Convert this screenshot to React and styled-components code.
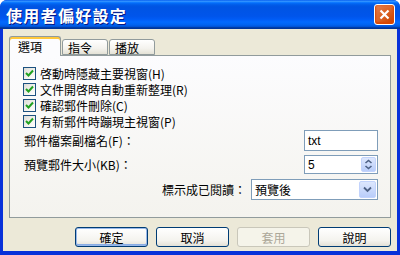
import React from "react";
import styled, { createGlobalStyle } from "styled-components";

const Global = createGlobalStyle`
  html, body { margin: 0; padding: 0; background: #ffffff; }
  body { font-family: "Noto Sans CJK TC", "Liberation Sans", sans-serif; font-size: 12px; }
  * { box-sizing: border-box; }
`;

const Window = styled.div`
  width: 400px;
  height: 255px;
  display: flex;
  flex-direction: column;
  background: #0831d9;
  border-radius: 7px 7px 0 0;
  overflow: hidden;
`;

const TitleBar = styled.div`
  height: 29px;
  flex: none;
  display: flex;
  align-items: center;
  justify-content: space-between;
  padding: 0 5px 0 6px;
  background: linear-gradient(
    180deg,
    #0058ee 0%,
    #3593ff 4%,
    #288eff 6%,
    #127dff 8%,
    #036ffc 10%,
    #0262ee 14%,
    #0057e5 20%,
    #0054e3 24%,
    #0055eb 56%,
    #005bf5 66%,
    #026afe 76%,
    #0062ef 86%,
    #0052d6 92%,
    #0040ab 94%,
    #003092 100%
  );
`;

const Title = styled.span`
  color: #ffffff;
  font-weight: bold;
  font-size: 16px;
  letter-spacing: 1.3px;
  line-height: 18px;
  text-shadow: 1px 1px 0 #0a1883;
`;

const CloseButton = styled.div`
  width: 21px;
  height: 21px;
  border: 1px solid #ffffff;
  border-radius: 3px;
  background: radial-gradient(circle at 90% 90%, #cc4600 0%, #dc6527 55%, #e4845b 100%);
  display: flex;
  align-items: center;
  justify-content: center;
  box-shadow: inset 0 -1px 2px 1px #da4600;
`;

const Body = styled.div`
  flex: 1;
  margin: 0 3px 4px 3px;
  background: #ece9d8;
  display: flex;
  flex-direction: column;
  padding: 7px 6px 0 6px;
`;

const TabRow = styled.div`
  display: flex;
  align-items: flex-end;
  height: 19px;
  position: relative;
  z-index: 1;
`;

const Tab = styled.div`
  height: ${(p) => (p.$active ? "20px" : "16px")};
  margin-bottom: ${(p) => (p.$active ? "-1px" : "0")};
  padding: 0 ${(p) => (p.$active ? "8px" : "5px")};
  width: ${(p) => (p.$active ? "52px" : "46px")};
  display: flex;
  align-items: center;
  font-size: 12px;
  color: #000;
  border: 1px solid #919b9c;
  border-bottom: ${(p) => (p.$active ? "none" : "1px solid #919b9c")};
  border-radius: 3px 3px 0 0;
  background: ${(p) =>
    p.$active ? "#fcfcfe" : "linear-gradient(180deg, #ffffff 0%, #f4f3ee 60%, #e4e2d6 100%)"};
  box-shadow: ${(p) => (p.$active ? "inset 0 2px 0 #ffc83c, inset 0 1px 0 #e68b2c" : "none")};
  margin-right: 1px;
`;

const Panel = styled.div`
  height: 163px;
  border: 1px solid #919b9c;
  background: linear-gradient(180deg, #fcfcfe 0%, #f4f3ee 100%);
  padding: 9px 0 0 13px;
  display: flex;
  flex-direction: column;
`;

const CheckRow = styled.label`
  height: 16px;
  display: flex;
  align-items: center;
  gap: 4px;
  color: #000;
  white-space: nowrap;
`;

const Box = styled.span`
  width: 13px;
  height: 13px;
  flex: none;
  border: 1px solid #1c5180;
  background: linear-gradient(135deg, #dcdcd7 0%, #f5f4ef 60%, #ffffff 100%);
  display: flex;
  align-items: center;
  justify-content: center;
`;

const FieldRow = styled.div`
  display: flex;
  align-items: center;
  justify-content: space-between;
  padding-right: 12px;
  height: 21px;
  margin-top: ${(p) => p.$mt || 0}px;
  white-space: nowrap;
`;

const RightRow = styled.div`
  display: flex;
  align-items: center;
  justify-content: flex-end;
  gap: 5px;
  padding-right: 12px;
  height: 21px;
  margin-top: ${(p) => p.$mt || 0}px;
  white-space: nowrap;
`;

const Label = styled.span`
  color: #000;
  padding-left: 1px;
`;

const TextBox = styled.div`
  width: 74px;
  height: 21px;
  border: 1px solid #7f9db9;
  background: #fff;
  display: flex;
  align-items: center;
  padding-left: 3px;
  font-family: "Liberation Sans", sans-serif;
  font-size: 12px;
`;

const SpinBox = styled(TextBox)`
  justify-content: space-between;
  padding-right: 1px;
  height: 19px;
`;

const SpinButtons = styled.div`
  width: 15px;
  height: 15px;
  border-radius: 2px;
  background: linear-gradient(180deg, #dde7fd 0%, #b9cdfa 100%);
  border: 1px solid #c2d3fc;
  display: flex;
  align-items: center;
  justify-content: center;
`;

const Combo = styled(TextBox)`
  width: 127px;
  justify-content: space-between;
  padding-right: 1px;
  font-family: "Noto Sans CJK TC", sans-serif;
`;

const DropButton = styled.div`
  width: 17px;
  height: 17px;
  border-radius: 2px;
  background: linear-gradient(180deg, #dde7fd 0%, #b9cdfa 100%);
  border: 1px solid #c2d3fc;
  display: flex;
  align-items: center;
  justify-content: center;
`;

const ButtonRow = styled.div`
  display: flex;
  justify-content: flex-end;
  gap: 8px;
  margin-top: 9px;
`;

const Button = styled.div`
  width: 73px;
  height: 20px;
  border-radius: 3px;
  border: 1px solid ${(p) => (p.$disabled ? "#c9c7ba" : "#003c74")};
  background: ${(p) =>
    p.$disabled ? "#f5f4ea" : "linear-gradient(180deg, #ffffff 0%, #f4f3ee 70%, #e3e1d7 100%)"};
  color: ${(p) => (p.$disabled ? "#aca899" : "#000")};
  box-shadow: ${(p) => (p.$focus ? "inset 0 0 0 1px #98b8ea, inset 0 -1px 0 1px #89ade4" : "none")};
  display: flex;
  align-items: center;
  justify-content: center;
  font-size: 12px;
`;

const Check = () => (
  <svg width="9" height="9" viewBox="0 0 9 9">
    <path d="M1 4 L3.5 6.5 L8 1.5" stroke="#21a121" strokeWidth="2" fill="none" />
  </svg>
);

export default function App() {
  return (
    <>
      <Global />
      <Window>
        <TitleBar>
          <Title>使用者偏好設定</Title>
          <CloseButton>
            <svg width="11" height="11" viewBox="0 0 11 11">
              <path d="M1.5 1.5 L9.5 9.5 M9.5 1.5 L1.5 9.5" stroke="#fff" strokeWidth="2.2" />
            </svg>
          </CloseButton>
        </TitleBar>
        <Body>
          <TabRow>
            <Tab $active>選項</Tab>
            <Tab>指令</Tab>
            <Tab>播放</Tab>
          </TabRow>
          <Panel>
            <CheckRow><Box><Check /></Box>啓動時隱藏主要視窗(H)</CheckRow>
            <CheckRow><Box><Check /></Box>文件開啓時自動重新整理(R)</CheckRow>
            <CheckRow><Box><Check /></Box>確認郵件刪除(C)</CheckRow>
            <CheckRow><Box><Check /></Box>有新郵件時蹦現主視窗(P)</CheckRow>
            <FieldRow $mt={1}>
              <Label>郵件檔案副檔名(F)：</Label>
              <TextBox>txt</TextBox>
            </FieldRow>
            <FieldRow $mt={3}>
              <Label>預覽郵件大小(KB)：</Label>
              <SpinBox>
                5
                <SpinButtons>
                  <svg width="9" height="11" viewBox="0 0 9 11">
                    <path d="M1.5 4 L4.5 1.5 L7.5 4 M1.5 7 L4.5 9.5 L7.5 7" stroke="#4d6185" strokeWidth="1.6" fill="none" />
                  </svg>
                </SpinButtons>
              </SpinBox>
            </FieldRow>
            <RightRow $mt={4}>
              <Label>標示成已閱讀：</Label>
              <Combo>
                預覽後
                <DropButton>
                  <svg width="9" height="7" viewBox="0 0 9 7">
                    <path d="M1 1.5 L4.5 5 L8 1.5" stroke="#4d6185" strokeWidth="1.8" fill="none" />
                  </svg>
                </DropButton>
              </Combo>
            </RightRow>
          </Panel>
          <ButtonRow>
            <Button $focus>確定</Button>
            <Button>取消</Button>
            <Button $disabled>套用</Button>
            <Button>說明</Button>
          </ButtonRow>
        </Body>
      </Window>
    </>
  );
}
